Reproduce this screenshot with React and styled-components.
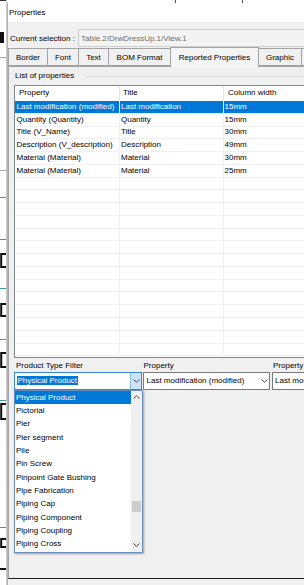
import React from "react"
import styled, { createGlobalStyle } from "styled-components"

const GlobalStyle = createGlobalStyle`
  html, body {
    margin: 0;
    padding: 0;
  }
  body {
    background: #f0f0f0;
    font-family: "Liberation Sans", Arial, sans-serif;
    font-size: 8px;
    color: #000;
  }
  * {
    box-sizing: border-box;
  }
`

const Screen = styled.div`
  width: 304px;
  height: 585px;
  display: flex;
  overflow: hidden;
`

const LeftBackdrop = styled.svg`
  flex: 0 0 7px;
  display: block;
  background: #fff;
`

const Column = styled.div`
  flex: 1;
  min-width: 0;
  display: flex;
  flex-direction: column;
`

const TopBackdrop = styled.svg`
  display: block;
  flex: 0 0 3px;
  background: #fff;
`

const Dialog = styled.div`
  flex: 1;
  display: flex;
  flex-direction: column;
  border-left: 1px solid #b4b4b4;
  background: #f0f0f0;
  width: 420px;
`

const TitleBar = styled.div`
  height: 19px;
  background: #fff;
  display: flex;
  align-items: center;
  padding-left: 1px;
  line-height: 10px;
`

const SelectionRow = styled.div`
  margin-top: 7px;
  height: 18px;
  display: flex;
  align-items: center;
  padding-left: 2px;
`

const SelectionLabel = styled.div`
  width: 68px;
  flex: 0 0 68px;
`

const ReadOnlyBox = styled.div`
  flex: 1;
  height: 18px;
  border: 1px solid #cfcfcf;
  background: #f3f3f3;
  color: #6d6d6d;
  display: flex;
  align-items: center;
  padding-left: 2px;
`

const TabStrip = styled.div`
  height: 19px;
  display: flex;
  align-items: flex-end;
  position: relative;
  z-index: 1;
`

const Tab = styled.div`
  width: ${p => p.w}px;
  height: ${p => (p.active ? 20 : 18)}px;
  margin-left: ${p => (p.first ? 0 : -1)}px;
  margin-bottom: ${p => (p.active ? -1 : 0)}px;
  border: 1px solid #a3a3a3;
  border-bottom: ${p => (p.active ? "none" : "1px solid #a3a3a3")};
  background: ${p => (p.active ? "#f4f4f4" : "#f0f0f0")};
  display: flex;
  align-items: center;
  justify-content: center;
  white-space: nowrap;
  position: relative;
  z-index: ${p => (p.active ? 2 : 1)};
`

const TabPage = styled.div`
  height: 513px;
  border-top: 1px solid #a3a3a3;
  border-left: 1px solid #a3a3a3;
  border-bottom: 1px solid #1c1c1c;
  background: #f0f0f0;
`

const GroupHeader = styled.div`
  margin: 4px 0 0 6px;
  height: 10px;
  display: flex;
  align-items: center;
  line-height: 10px;
`

const GroupLine = styled.div`
  flex: 1;
  height: 1px;
  margin-left: 12px;
  background: #d8d8d8;
`

const ListView = styled.div`
  margin: 4px 0 0 5px;
  width: 420px;
  height: 273px;
  border: 1px solid #828790;
  background: #fff;
  overflow: hidden;
`

const ListRow = styled.div`
  display: grid;
  grid-template-columns: 105px 104px 1fr;
  height: ${p => (p.header ? 15 : 12.78)}px;
  background: ${p => (p.selected ? "#0078d7" : "#fff")};
  color: ${p => (p.selected ? "#fff" : "#000")};
  border-bottom: 1px solid ${p => (p.header ? "#fff" : "#f0f0f0")};
`

const Cell = styled.div`
  display: flex;
  align-items: center;
  padding-left: ${p => p.pad}px;
  border-right: 1px solid ${p => (p.header ? "#e5e5e5" : "#f0f0f0")};
  white-space: nowrap;
  overflow: hidden;
  line-height: 10px;
`

const FilterGrid = styled.div`
  margin: 3px 0 0 5px;
  display: grid;
  grid-template-columns: 128.5px 129.5px 128px;
`

const Field = styled.div`
  position: relative;
  display: flex;
  flex-direction: column;
`

const FieldLabel = styled.div`
  height: 10px;
  line-height: 10px;
  padding-left: ${p => p.pad}px;
  white-space: nowrap;
`

const Combo = styled.div`
  width: ${p => p.w}px;
  height: 18px;
  margin-top: 0.5px;
  border: 1px solid ${p => (p.focused ? "#3a86d4" : "#7a7a7a")};
  background: #fff;
  display: flex;
  align-items: center;
`

const ComboText = styled.div`
  flex: 1;
  padding-left: ${p => p.pad}px;
  white-space: nowrap;
  overflow: hidden;
  line-height: 10px;
`

const Highlight = styled.span`
  background: #0078d7;
  color: #fff;
  padding: 0 1px;
`

const ComboButton = styled.div`
  flex: 0 0 11px;
  align-self: stretch;
  display: flex;
  align-items: center;
  justify-content: center;
  background: ${p => (p.open ? "#cce4f7" : "transparent")};
  border-left: 1px solid ${p => (p.open ? "#8ebde8" : "transparent")};
`

const DropList = styled.div`
  position: absolute;
  left: 0;
  top: 28.5px;
  width: 129px;
  height: 163px;
  border: 1px solid #6a8fbf;
  background: #fff;
  box-shadow: 1px 1px 2px rgba(0, 0, 0, 0.35);
  display: flex;
  z-index: 5;
`

const DropItems = styled.div`
  flex: 1;
  padding-top: 0.5px;
`

const DropItem = styled.div`
  height: 13.33px;
  display: flex;
  align-items: center;
  padding-left: 1px;
  line-height: 10px;
  white-space: nowrap;
  background: ${p => (p.selected ? "#0078d7" : "transparent")};
  color: ${p => (p.selected ? "#fff" : "#000")};
`

const ScrollBar = styled.div`
  flex: 0 0 11px;
  display: flex;
  flex-direction: column;
  background: #f0f0f0;
`

const ScrollArrow = styled.div`
  height: 13px;
  display: flex;
  align-items: center;
  justify-content: center;
`

const ScrollTrack = styled.div`
  flex: 1;
  position: relative;
`

const ScrollThumb = styled.div`
  position: absolute;
  left: 1px;
  right: 1px;
  height: 11px;
  background: #cdcdcd;
`

const Chevron = ({ up }) => (
  <svg width="7" height="4" viewBox="0 0 7 4">
    <path
      d={up ? "M0.5 3.5 L3.5 0.7 L6.5 3.5" : "M0.5 0.5 L3.5 3.3 L6.5 0.5"}
      fill="none"
      stroke="#404040"
      strokeWidth="1"
    />
  </svg>
)

const tabs = [
  { label: "Border", w: 40 },
  { label: "Font", w: 32 },
  { label: "Text", w: 31 },
  { label: "BOM Format", w: 63 },
  { label: "Reported Properties", w: 89, active: true },
  { label: "Graphic", w: 44 },
  { label: "", w: 40 },
]

const rows = [
  ["Last modification (modified)", "Last modification", "15mm"],
  ["Quantity (Quantity)", "Quantity", "15mm"],
  ["Title (V_Name)", "Title", "30mm"],
  ["Description (V_description)", "Description", "49mm"],
  ["Material (Material)", "Material", "30mm"],
  ["Material (Material)", "Material", "25mm"],
]

const emptyRows = Array.from({ length: 14 }, () => ["", "", ""])

const productTypes = [
  "Physical Product",
  "Pictorial",
  "Pier",
  "Pier segment",
  "Pile",
  "Pin Screw",
  "Pinpoint Gate Bushing",
  "Pipe Fabrication",
  "Piping Cap",
  "Piping Component",
  "Piping Coupling",
  "Piping Cross",
]

// bits of the drawing behind the dialog
const cShapes = [
  [253, 268],
  [303, 317],
  [352, 368],
  [403, 420],
  [538, 548],
]
const tealLines = [197, 239, 288, 339, 400, 527]

export default function App() {
  return (
    <>
      <GlobalStyle />
      <Screen>
        <LeftBackdrop width="7" height="585" viewBox="0 0 7 585">
          <rect x="0" y="0" width="7" height="1" fill="#333" />
          <rect x="0" y="32" width="4" height="11" fill="#111" />
          <rect x="0" y="57" width="7" height="1" fill="#aaa" />
          <rect x="0" y="170" width="7" height="1" fill="#aaa" />
          {tealLines.map(y => (
            <rect key={y} x="0" y={y} width="7" height="1" fill="#3e9ea3" />
          ))}
          {cShapes.map(([a, b]) => (
            <path
              key={a}
              d={`M6 ${a + 1} H1.2 V${b - 1} H6`}
              fill="none"
              stroke="#111"
              strokeWidth="2"
            />
          ))}
          <rect x="0" y="568" width="7" height="2" fill="#111" />
          <rect x="6" y="0" width="1" height="585" fill="#c8c8c8" />
        </LeftBackdrop>
        <Column>
          <TopBackdrop width="297" height="3" viewBox="0 0 297 3">
            <rect x="168" y="0" width="1" height="3" fill="#555" />
            <rect x="235" y="0" width="1" height="3" fill="#555" />
          </TopBackdrop>
          <Dialog>
            <TitleBar>Properties</TitleBar>
            <SelectionRow>
              <SelectionLabel>Current selection :</SelectionLabel>
              <ReadOnlyBox>Table.2/DrwDressUp.1/View.1</ReadOnlyBox>
            </SelectionRow>
            <TabStrip>
              {tabs.map((t, i) => (
                <Tab key={i} w={t.w} active={t.active} first={i === 0}>
                  {t.label}
                </Tab>
              ))}
            </TabStrip>
            <TabPage>
              <GroupHeader>
                List of properties
                <GroupLine />
              </GroupHeader>
              <ListView>
                <ListRow header>
                  <Cell header pad={4}>Property</Cell>
                  <Cell header pad={3}>Title</Cell>
                  <Cell header pad={4}>Column width</Cell>
                </ListRow>
                {[...rows, ...emptyRows].map((r, i) => (
                  <ListRow key={i} selected={i === 0}>
                    <Cell pad={1.5}>{r[0]}</Cell>
                    <Cell pad={1}>{r[1]}</Cell>
                    <Cell pad={0.5}>{r[2]}</Cell>
                  </ListRow>
                ))}
              </ListView>
              <FilterGrid>
                <Field>
                  <FieldLabel pad={2}>Product Type Filter</FieldLabel>
                  <Combo w={128} focused>
                    <ComboText pad={1.5}>
                      <Highlight>Physical Product</Highlight>
                    </ComboText>
                    <ComboButton open>
                      <Chevron />
                    </ComboButton>
                  </Combo>
                  <DropList>
                    <DropItems>
                      {productTypes.map((p, i) => (
                        <DropItem key={p} selected={i === 0}>
                          {p}
                        </DropItem>
                      ))}
                    </DropItems>
                    <ScrollBar>
                      <ScrollArrow>
                        <Chevron up />
                      </ScrollArrow>
                      <ScrollTrack>
                        <ScrollThumb style={{ top: 97 }} />
                      </ScrollTrack>
                      <ScrollArrow>
                        <Chevron />
                      </ScrollArrow>
                    </ScrollBar>
                  </DropList>
                </Field>
                <Field>
                  <FieldLabel pad={1}>Property</FieldLabel>
                  <Combo w={127.5}>
                    <ComboText pad={3}>Last modification (modified)</ComboText>
                    <ComboButton>
                      <Chevron />
                    </ComboButton>
                  </Combo>
                </Field>
                <Field>
                  <FieldLabel pad={1}>Property</FieldLabel>
                  <Combo w={128}>
                    <ComboText pad={2}>Last modification (modified)</ComboText>
                    <ComboButton>
                      <Chevron />
                    </ComboButton>
                  </Combo>
                </Field>
              </FilterGrid>
            </TabPage>
          </Dialog>
        </Column>
      </Screen>
    </>
  )
}
